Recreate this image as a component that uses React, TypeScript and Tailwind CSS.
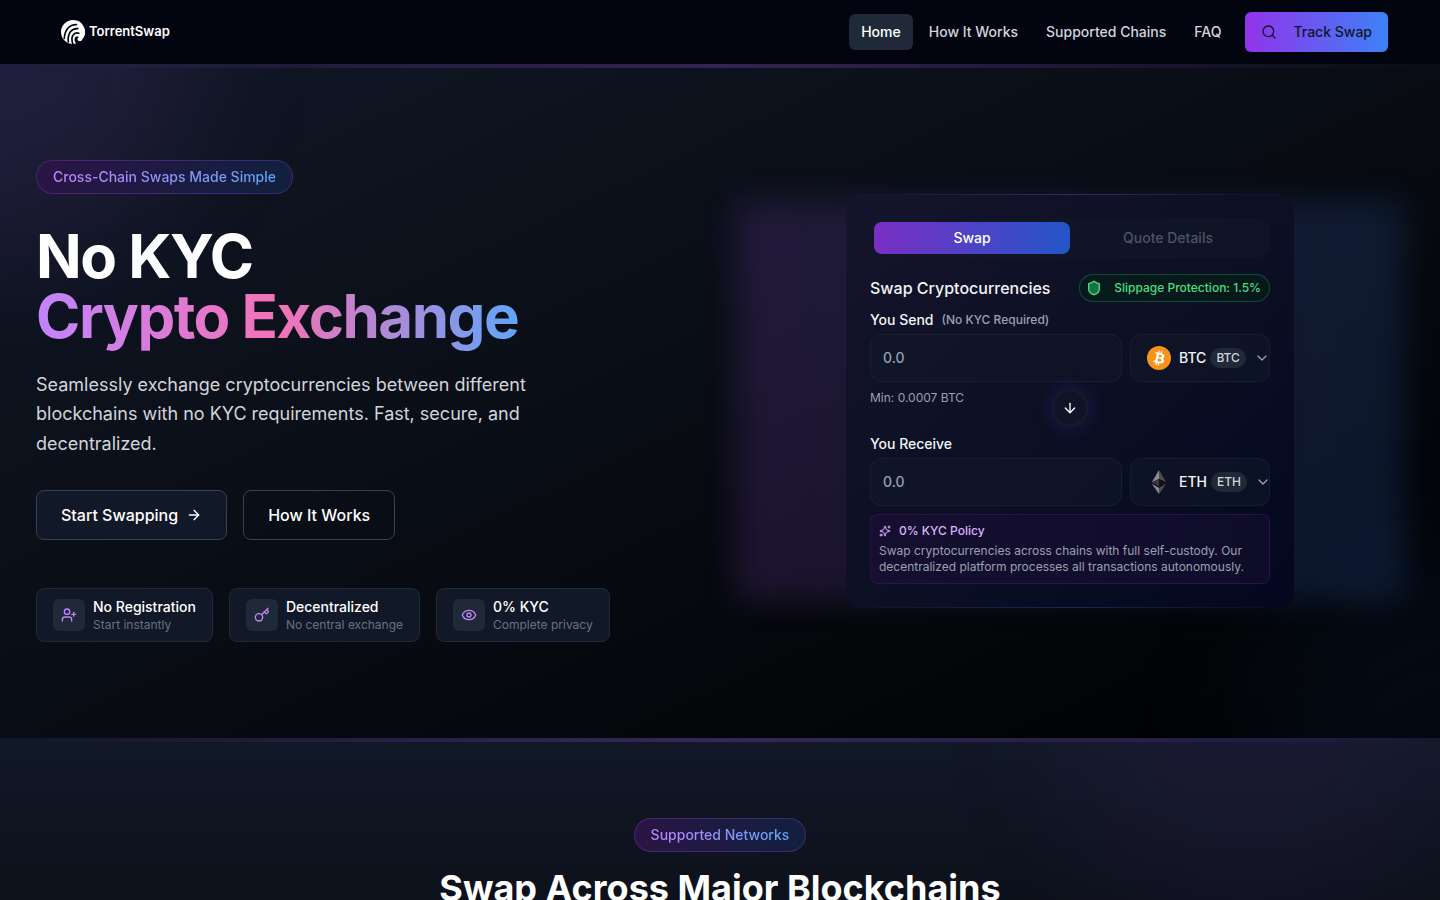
import { useId, useState } from "react";
import type { ReactNode } from "react";
import {
  ArrowDown,
  ArrowRight,
  ChevronDown,
  Eye,
  Key,
  Search,
  Shield,
  Sparkles,
  UserPlus,
} from "lucide-react";

const NAV = [
  { label: "Home", href: "#home", active: true },
  { label: "How It Works", href: "#how", active: false },
  { label: "Supported Chains", href: "#chains", active: false },
  { label: "FAQ", href: "#faq", active: false },
];

const FEATURES = [
  { icon: UserPlus, title: "No Registration", text: "Start instantly" },
  { icon: Key, title: "Decentralized", text: "No central exchange" },
  { icon: Eye, title: "0% KYC", text: "Complete privacy" },
];

function LogoMark() {
  return (
    <svg viewBox="0 0 24 24" className="size-6" aria-hidden="true">
      <path
        fill="#fff"
        d="M12 0a12 12 0 0 1 8.600 20.400c-1.200 1.200-3.600.900-4.100-.8-.3-1.200.5-2.100 1.500-2.100-.8-1.500-3.300-1.300-4.100.4-.8 1.700-.2 4.100 1.300 5.700-1 .3-2 .4-3.200.4A12 12 0 0 1 12 0Z"
      />
      <g fill="none" stroke="#02040f" strokeWidth="1.700" strokeLinecap="round">
        <path d="M15.500 4.600C8.500 4.400 3.600 9.800 3.300 18.500" />
        <path d="M16.800 8.600C10.500 8.200 6.400 13 7.300 22" />
        <path d="M17.800 13.200C12.800 11.800 9.400 16.200 11.700 23.600" />
      </g>
    </svg>
  );
}

function BitcoinIcon() {
  return (
    <svg viewBox="0 0 32 32" className="size-6 shrink-0" aria-hidden="true">
      <circle cx="16" cy="16" r="16" fill="#f7931a" />
      <path
        fill="#fff"
        fillRule="evenodd"
        d="M23.189 14.020c.314-2.096-1.283-3.223-3.465-3.975l.708-2.840-1.728-.43-.690 2.765c-.454-.114-.920-.220-1.385-.326l.695-2.783L15.596 6l-.708 2.839c-.376-.086-.746-.170-1.104-.260l.002-.009-2.384-.595-.460 1.846s1.283.294 1.256.312c.700.175.826.638.805 1.006l-.806 3.235c.048.012.110.030.180.057l-.183-.045-1.130 4.532c-.086.212-.303.531-.793.410.018.025-1.256-.313-1.256-.313l-.858 1.978 2.250.561c.418.105.828.215 1.231.318l-.715 2.872 1.727.430.708-2.840c.472.127.930.245 1.378.357l-.706 2.828 1.728.430.715-2.866c2.948.558 5.164.333 6.097-2.333.752-2.146-.037-3.385-1.588-4.192 1.130-.260 1.980-1.003 2.207-2.538zm-3.950 5.538c-.533 2.147-4.148.986-5.320.695l.950-3.805c1.172.293 4.929.872 4.370 3.110zm.535-5.569c-.487 1.953-3.495.960-4.470.717l.860-3.450c.975.243 4.118.696 3.610 2.733z"
      />
    </svg>
  );
}

function EthereumIcon() {
  return (
    <svg viewBox="0 0 24 24" className="size-6 shrink-0" aria-hidden="true">
      <path d="M12 0 4.800 12.200 12 9Z" fill="#8c8c8c" />
      <path d="M12 0v9l7.200 3.200Z" fill="#4d4d4d" />
      <path d="M12 9v7.400l-7.200-4.200Z" fill="#393939" />
      <path d="M12 9v7.400l7.200-4.200Z" fill="#141414" />
      <path d="M4.800 13.700 12 17.900V24Z" fill="#8c8c8c" />
      <path d="M19.200 13.700 12 17.900V24Z" fill="#4d4d4d" />
    </svg>
  );
}

function Pill({ children }: { children: ReactNode }) {
  return (
    <div className="inline-flex rounded-full border border-[#a855f7]/25 bg-linear-to-r/srgb from-[#2a1545] to-[#11203f] px-4 py-1.5">
      <span className="bg-linear-to-r/srgb from-[#c084fc] to-[#60a5fa] bg-clip-text text-sm font-medium text-transparent">
        {children}
      </span>
    </div>
  );
}

function TopLine() {
  return <div className="h-1 bg-linear-to-r/srgb from-[#a855f7]/0 via-[#a855f7]/25 to-[#a855f7]/0" />;
}

function AmountRow({
  label,
  hint,
  symbol,
  icon,
}: {
  label: string;
  hint?: string;
  symbol: string;
  icon: ReactNode;
}) {
  const id = useId();
  return (
    <div>
      <div className="flex h-5 items-center gap-2">
        <label htmlFor={id} className="text-sm font-medium text-gray-100">
          {label}
        </label>
        {hint && <span className="text-xs font-medium text-gray-400">{hint}</span>}
      </div>
      <div className="mt-1 flex gap-2">
        <input
          id={id}
          type="text"
          inputMode="decimal"
          placeholder="0.0"
          className="h-12 min-w-0 flex-1 rounded-xl border border-gray-800/50 bg-gray-900/60 px-3 text-sm font-medium text-white placeholder:text-slate-400 focus:outline-none"
        />
        <button
          type="button"
          aria-label={`Select token, ${symbol}`}
          className="flex h-12 w-[140px] shrink-0 items-center rounded-xl border border-gray-800/50 bg-gray-900/60 pl-4"
        >
          {icon}
          <span className="ml-2 text-sm font-medium text-gray-100">{symbol}</span>
          <span className="ml-1 rounded-full bg-[#1f2937] px-1.5 py-0.5 text-xs font-medium text-gray-300">
            {symbol}
          </span>
          <ChevronDown className="ml-2 size-4 shrink-0 text-gray-400" />
        </button>
      </div>
    </div>
  );
}

function SwapCard() {
  const [tab, setTab] = useState("swap");
  const active =
    "h-8 flex-1 rounded-lg bg-linear-to-r/srgb from-[#7a2fc4] to-[#2456c8] text-sm font-medium text-white";
  const idle = "h-8 flex-1 rounded-lg text-sm font-medium text-gray-600";

  return (
    <div className="relative w-full max-w-md overflow-hidden rounded-2xl bg-linear-to-br/srgb from-[#15142b] via-[#0c1024] to-[#030820] p-6">
      <div className="absolute inset-x-0 top-0 h-px bg-linear-to-r/srgb from-[#a855f7]/0 via-[#a855f7]/30 to-[#a855f7]/0" />
      <div className="absolute inset-x-0 bottom-0 h-px bg-linear-to-r/srgb from-[#3b82f6]/0 via-[#3b82f6]/25 to-[#3b82f6]/0" />

      <div className="flex rounded-xl bg-gray-900/60 p-1">
        <button type="button" className={tab === "swap" ? active : idle} onClick={() => setTab("swap")}>
          Swap
        </button>
        <button type="button" className={tab === "quote" ? active : idle} onClick={() => setTab("quote")}>
          Quote Details
        </button>
      </div>

      <div className="mt-4 flex items-center justify-between">
        <h2 className="text-base font-medium text-gray-100">Swap Cryptocurrencies</h2>
        <div className="flex h-7 items-center rounded-full border border-[#22c55e]/30 bg-[#08191c] pr-2 pl-1.5 text-xs font-medium text-[#4ade80]">
          <Shield className="mr-3 size-4 fill-[#177245]" />
          Slippage Protection: 1.5%
        </div>
      </div>

      <div className="mt-2">
        <AmountRow label="You Send" hint="(No KYC Required)" symbol="BTC" icon={<BitcoinIcon />} />
        <div className="relative h-[52px] pt-2">
          <p className="text-xs text-gray-400">Min: 0.0007 BTC</p>
          <button
            type="button"
            aria-label="Switch direction"
            className="absolute top-2 left-1/2 flex size-9 -translate-x-1/2 items-center justify-center rounded-full border border-gray-800/60 bg-[#101427] text-white shadow-[0_0_20px_rgba(88,60,220,0.25)]"
          >
            <ArrowDown className="size-4" />
          </button>
        </div>
        <AmountRow label="You Receive" symbol="ETH" icon={<EthereumIcon />} />
      </div>

      <div className="mt-2 rounded-lg border border-[#581c87]/35 bg-linear-to-r/srgb from-[#160f30] to-[#0f0c2a] p-2">
        <p className="flex items-center gap-2 text-xs font-medium text-[#d8b4fe]">
          <Sparkles className="size-3" />
          0% KYC Policy
        </p>
        <p className="mt-1 text-xs text-gray-400">
          Swap cryptocurrencies across chains with full self-custody. Our decentralized platform processes all
          transactions autonomously.
        </p>
      </div>
    </div>
  );
}

export default function App() {
  return (
    <div className="h-screen overflow-hidden bg-black font-[Inter,sans-serif] text-white">
      <header className="flex h-16 items-center justify-between bg-[#02040f] pr-[52px] pl-[61px]">
        <a href="#home" className="flex items-center gap-1 text-[13px] font-semibold">
          <LogoMark />
          TorrentSwap
        </a>
        <nav className="flex items-center gap-1">
          {NAV.map((item) => (
            <a
              key={item.label}
              href={item.href}
              className={
                item.active
                  ? "rounded-md bg-[#1f2937] px-3 py-2 text-sm font-medium text-white"
                  : "rounded-md px-3 py-2 text-sm font-medium text-gray-300"
              }
            >
              {item.label}
            </a>
          ))}
          <button
            type="button"
            className="ml-2 flex h-10 items-center gap-4 rounded-md bg-linear-to-r/srgb from-[#9333ea] to-[#3b82f6] px-4 text-sm font-medium text-slate-900"
          >
            <Search className="size-4" />
            Track Swap
          </button>
        </nav>
      </header>

      <section id="home" className="relative overflow-hidden bg-linear-to-br/srgb from-[#111827] to-black">
        <div className="absolute -top-48 -left-48 size-96 rounded-full bg-[#a855f7]/10 blur-3xl" />
        <div className="absolute -right-48 -bottom-48 size-96 rounded-full bg-[#3b82f6]/7 blur-3xl" />
        <div className="relative">
          <TopLine />
          <div className="grid grid-cols-2 items-center gap-8 px-9 pt-[92px] pb-24">
            <div>
              <Pill>Cross-Chain Swaps Made Simple</Pill>
              <h1 className="mt-8 text-6xl leading-none font-bold tracking-tight">
                No KYC
                <br />
                <span className="bg-linear-to-r/srgb from-[#c084fc] via-[#f472b6] to-[#60a5fa] bg-clip-text text-transparent">
                  Crypto Exchange
                </span>
              </h1>
              <p className="mt-6 max-w-lg text-lg leading-relaxed text-gray-300">
                Seamlessly exchange cryptocurrencies between different blockchains with no KYC requirements. Fast,
                secure, and decentralized.
              </p>
              <div className="mt-8 flex gap-4">
                <button
                  type="button"
                  className="flex h-[50px] items-center gap-2 rounded-lg border border-gray-700 bg-[#111827] px-6 text-base font-medium"
                >
                  Start Swapping
                  <ArrowRight className="size-4" />
                </button>
                <button
                  type="button"
                  className="h-[50px] rounded-lg border border-gray-700 px-6 text-base font-medium"
                >
                  How It Works
                </button>
              </div>
              <ul className="mt-12 flex gap-4">
                {FEATURES.map(({ icon: Icon, title, text }) => (
                  <li
                    key={title}
                    className="flex items-center gap-2 rounded-lg border border-[#1f2937] bg-[#111827] px-4 py-2"
                  >
                    <span className="flex size-8 items-center justify-center rounded-md bg-[#1f2937]">
                      <Icon className="size-4 text-[#c084fc]" />
                    </span>
                    <span>
                      <span className="block text-sm font-medium">{title}</span>
                      <span className="block text-xs text-gray-500">{text}</span>
                    </span>
                  </li>
                ))}
              </ul>
            </div>

            <div className="relative flex justify-center">
              <div className="absolute inset-x-0 inset-y-2 bg-linear-to-r/srgb from-[#a855f7]/15 to-[#3b82f6]/15 blur-lg" />
              <SwapCard />
            </div>
          </div>
        </div>
      </section>

      <section id="chains" className="relative overflow-hidden bg-linear-to-b/srgb from-[#111827] to-[#0a0d14]">
        <div className="absolute -top-48 right-0 size-96 rounded-full bg-[#a855f7]/5 blur-3xl" />
        <div className="relative">
          <TopLine />
          <div className="px-9 pt-[76px] pb-20 text-center">
            <Pill>Supported Networks</Pill>
            <h2 className="mt-4 text-4xl leading-10 font-bold">Swap Across Major Blockchains</h2>
          </div>
        </div>
      </section>
    </div>
  );
}
